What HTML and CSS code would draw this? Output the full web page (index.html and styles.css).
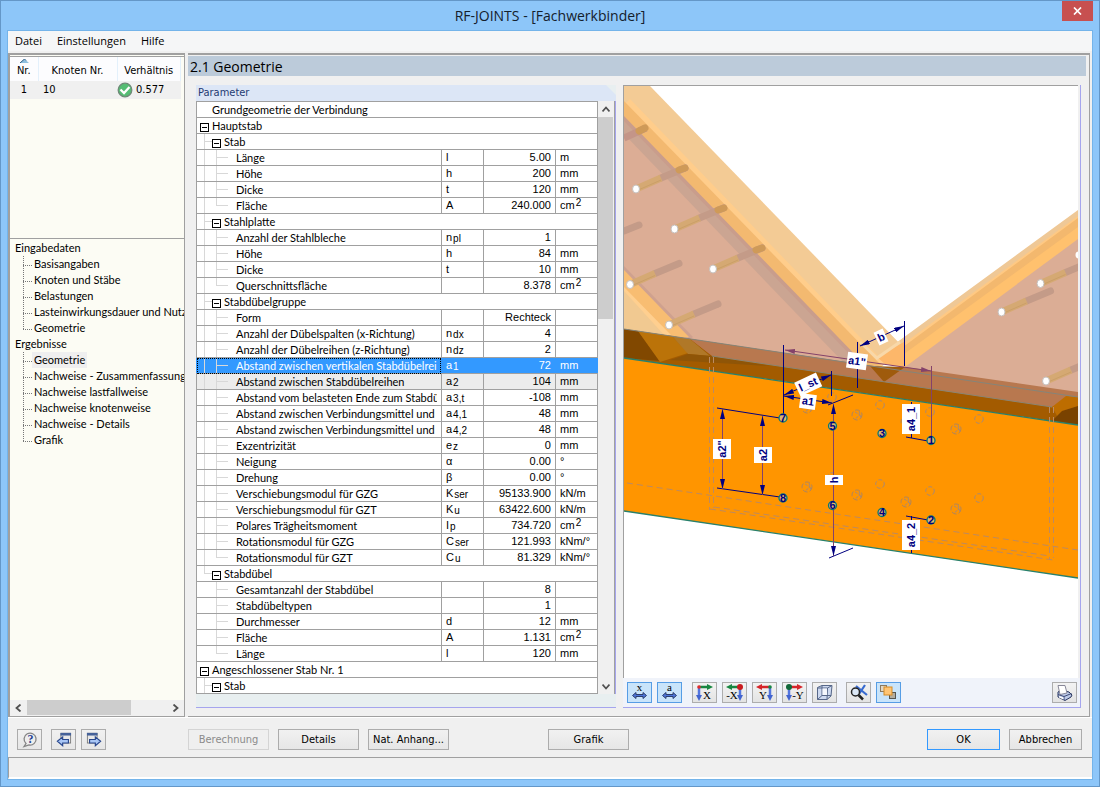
FILE: index.html
```html
<!DOCTYPE html>
<html lang="de">
<head>
<meta charset="utf-8">
<title>RF-JOINTS - [Fachwerkbinder]</title>
<link rel="stylesheet" href="styles.css">
</head>
<body>
<div class="window">
  <header class="titlebar">
    <h1>RF-JOINTS - [Fachwerkbinder]</h1>
    <button class="close" type="button" aria-label="Schließen"><svg width="9" height="8" viewBox="0 0 9 8"><path d="M1 0.5 8 7.5M8 0.5 1 7.5" stroke="#fff" stroke-width="1.7"/></svg></button>
  </header>
  <div class="client">
    <nav class="menubar"><button type="button">Datei</button><button type="button">Einstellungen</button><button type="button">Hilfe</button></nav>

    <main class="main">
      <aside class="side">
        <div class="cases">
          <table class="case-table">
            <colgroup><col class="c-nr"><col class="c-node"><col></colgroup>
            <thead><tr><th><svg class="sort" width="9" height="4" viewBox="0 0 9 4"><path d="M0 4 4.5 0 9 4z" fill="#8fc0e0"/><path d="M0 4 4.5 0 6 1.500" fill="none" stroke="#2c5a80"/></svg>Nr.</th><th>Knoten Nr.</th><th>Verhältnis</th></tr></thead>
            <tbody><tr><td class="nr">1</td><td>10</td><td class="ratio"><svg width="16" height="16" viewBox="0 0 16 16"><circle cx="8" cy="8" r="6.800" fill="#55bd74" stroke="#6f8a78" stroke-width="1.300"/><path d="M3.500 7.500 7 11 12.500 5" fill="none" stroke="#fff" stroke-width="2.300"/></svg>0.577</td></tr></tbody>
          </table>
        </div>
        <nav class="tree">
          <div class="branch">Eingabedaten</div>
          <ul>
            <li><a href="#">Basisangaben</a></li>
            <li><a href="#">Knoten und Stäbe</a></li>
            <li><a href="#">Belastungen</a></li>
            <li><a href="#">Lasteinwirkungsdauer und Nutz</a></li>
            <li><a href="#">Geometrie</a></li>
          </ul>
          <div class="branch">Ergebnisse</div>
          <ul>
            <li><a href="#" class="current">Geometrie</a></li>
            <li><a href="#">Nachweise - Zusammenfassung</a></li>
            <li><a href="#">Nachweise lastfallweise</a></li>
            <li><a href="#">Nachweise knotenweise</a></li>
            <li><a href="#">Nachweise - Details</a></li>
            <li><a href="#">Grafik</a></li>
          </ul>
        </nav>
        <div class="hscroll">
          <button type="button" aria-label="Nach links"><svg width="7" height="8" viewBox="0 0 7 8"><path d="M5.500 0.500 1.500 4 5.500 7.500" fill="none" stroke="#505050" stroke-width="1.800"/></svg></button>
          <div class="htrack"><div class="hthumb"></div></div>
          <button type="button" aria-label="Nach rechts"><svg width="7" height="8" viewBox="0 0 7 8"><path d="M1.500 0.500 5.500 4 1.500 7.500" fill="none" stroke="#505050" stroke-width="1.800"/></svg></button>
        </div>
      </aside>

      <section class="content">
        <h2>2.1 Geometrie</h2>
        <div class="panes">
          <section class="params">
            <h3>Parameter</h3>
            <div class="grid-wrap">
              <table class="grid">
                <colgroup><col><col class="c-sym"><col class="c-val"><col class="c-unit"></colgroup>
                <tbody>
                <tr><td colspan="4" class="g0 plain">Grundgeometrie der Verbindung</td></tr>
                <tr><td colspan="4" class="g0"><button class="fold" type="button" aria-label="Hauptstab"></button>Hauptstab</td></tr>
                <tr><td colspan="4" class="g1"><button class="fold" type="button" aria-label="Stab"></button>Stab</td></tr>
                <tr><td class="leaf">Länge</td><td>l</td><td>5.00</td><td>m</td></tr>
                <tr><td class="leaf">Höhe</td><td>h</td><td>200</td><td>mm</td></tr>
                <tr><td class="leaf">Dicke</td><td>t</td><td>120</td><td>mm</td></tr>
                <tr><td class="leaf last">Fläche</td><td>A</td><td>240.000</td><td>cm<sup>2</sup></td></tr>
                <tr><td colspan="4" class="g1"><button class="fold" type="button" aria-label="Stahlplatte"></button>Stahlplatte</td></tr>
                <tr><td class="leaf">Anzahl der Stahlbleche</td><td>n<sub>pl</sub></td><td>1</td><td></td></tr>
                <tr><td class="leaf">Höhe</td><td>h</td><td>84</td><td>mm</td></tr>
                <tr><td class="leaf">Dicke</td><td>t</td><td>10</td><td>mm</td></tr>
                <tr><td class="leaf last">Querschnittsfläche</td><td></td><td>8.378</td><td>cm<sup>2</sup></td></tr>
                <tr><td colspan="4" class="g1"><button class="fold" type="button" aria-label="Stabdübelgruppe"></button>Stabdübelgruppe</td></tr>
                <tr><td class="leaf">Form</td><td></td><td>Rechteck</td><td></td></tr>
                <tr><td class="leaf">Anzahl der Dübelspalten (x-Richtung)</td><td>n<sub>dx</sub></td><td>4</td><td></td></tr>
                <tr><td class="leaf">Anzahl der Dübelreihen (z-Richtung)</td><td>n<sub>dz</sub></td><td>2</td><td></td></tr>
                <tr class="selected"><td class="leaf"><span>Abstand zwischen vertikalen Stabdübelreih</span></td><td>a<sub>1</sub></td><td>72</td><td>mm</td></tr>
                <tr class="shaded"><td class="leaf">Abstand zwischen Stabdübelreihen</td><td>a<sub>2</sub></td><td>104</td><td>mm</td></tr>
                <tr><td class="leaf"><span>Abstand vom belasteten Ende zum Stabdü</span></td><td>a<sub>3,t</sub></td><td>-108</td><td>mm</td></tr>
                <tr><td class="leaf"><span>Abstand zwischen Verbindungsmittel und F</span></td><td>a<sub>4,1</sub></td><td>48</td><td>mm</td></tr>
                <tr><td class="leaf"><span>Abstand zwischen Verbindungsmittel und F</span></td><td>a<sub>4,2</sub></td><td>48</td><td>mm</td></tr>
                <tr><td class="leaf">Exzentrizität</td><td>e<sub>z</sub></td><td>0</td><td>mm</td></tr>
                <tr><td class="leaf">Neigung</td><td>α</td><td>0.00</td><td>°</td></tr>
                <tr><td class="leaf">Drehung</td><td>β</td><td>0.00</td><td>°</td></tr>
                <tr><td class="leaf">Verschiebungsmodul für GZG</td><td>K<sub>ser</sub></td><td>95133.900</td><td>kN/m</td></tr>
                <tr><td class="leaf">Verschiebungsmodul für GZT</td><td>K<sub>u</sub></td><td>63422.600</td><td>kN/m</td></tr>
                <tr><td class="leaf">Polares Trägheitsmoment</td><td>I<sub>p</sub></td><td>734.720</td><td>cm<sup>2</sup></td></tr>
                <tr><td class="leaf">Rotationsmodul für GZG</td><td>C<sub>ser</sub></td><td>121.993</td><td>kNm/°</td></tr>
                <tr><td class="leaf last">Rotationsmodul für GZT</td><td>C<sub>u</sub></td><td>81.329</td><td>kNm/°</td></tr>
                <tr><td colspan="4" class="g1 end"><button class="fold" type="button" aria-label="Stabdübel"></button>Stabdübel</td></tr>
                <tr><td class="leaf tail">Gesamtanzahl der Stabdübel</td><td></td><td>8</td><td></td></tr>
                <tr><td class="leaf tail">Stabdübeltypen</td><td></td><td>1</td><td></td></tr>
                <tr><td class="leaf tail">Durchmesser</td><td>d</td><td>12</td><td>mm</td></tr>
                <tr><td class="leaf tail">Fläche</td><td>A</td><td>1.131</td><td>cm<sup>2</sup></td></tr>
                <tr><td class="leaf tail last">Länge</td><td>l</td><td>120</td><td>mm</td></tr>
                <tr><td colspan="4" class="g0"><button class="fold" type="button" aria-label="Angeschlossener Stab Nr. 1"></button>Angeschlossener Stab Nr. 1</td></tr>
                <tr><td colspan="4" class="g1"><button class="fold" type="button" aria-label="Stab"></button>Stab</td></tr>
                </tbody>
              </table>
              <div class="vscroll">
                <button type="button" aria-label="Nach oben"><svg width="8" height="7" viewBox="0 0 8 7"><path d="M0.500 5.500 4 1.500 7.500 5.500" fill="none" stroke="#505050" stroke-width="1.800"/></svg></button>
                <div class="vtrack"><div class="vthumb"></div></div>
                <button type="button" aria-label="Nach unten"><svg width="8" height="7" viewBox="0 0 8 7"><path d="M0.500 1.500 4 5.500 7.500 1.500" fill="none" stroke="#505050" stroke-width="1.800"/></svg></button>
              </div>
            </div>
          </section>

          <section class="viewer">
            <div class="canvas">
            <svg viewBox="624 86 454 592" preserveAspectRatio="xMidYMid slice" role="img" aria-label="Knotendetail">
              <defs>
                <marker id="arr" viewBox="0 0 12 6" refX="12" refY="3" markerWidth="10" markerHeight="5" orient="auto-start-reverse" markerUnits="userSpaceOnUse"><path d="M0 0 12 3 0 6z" fill="#000080"/></marker>
                <marker id="arrp" viewBox="0 0 12 6" refX="12" refY="3" markerWidth="10" markerHeight="5" orient="auto-start-reverse" markerUnits="userSpaceOnUse"><path d="M0 0 12 3 0 6z" fill="#84426a"/></marker>
                <g id="rod"><path d="M25-11 49-21" stroke="#c49b88" stroke-width="7" stroke-linecap="round"/><path d="M0 0 25-11" stroke="#d5a973" stroke-width="7"/><path d="M0 2 25-9" stroke="#cb9f68" stroke-width="1"/><ellipse rx="3.500" ry="4" fill="#fff" stroke="#c5c0bd"/></g>
                <g id="hole"><circle r="4.300" fill="none" stroke="#a98974" stroke-dasharray="4 2"/></g>
                <g id="hole2"><circle r="5" fill="none" stroke="#b0855d" stroke-dasharray="5 2"/><path d="M-2-3 3 0-2 4M2-4 4 3" fill="none" stroke="#a98974" stroke-dasharray="3 1"/></g>
                <g id="pin"><circle r="4" fill="#deb46e" stroke="#087872" stroke-width="1.300"/></g>
              </defs>
              <!-- right diagonal -->
              <path d="M1078 210 870 362 905 367 1078 393z" fill="#efc896"/>
              <path d="M1078 216 884 358 905 367 1078 393z" fill="#ffc983"/>
              <path d="M1078 218 884 361 905 367 1078 393z" fill="#f3b86e"/>
              <path d="M1078 227 889 365 905 367 1078 393z" fill="#ffc16e"/>
              <path d="M1078 239 905 367 1078 398z" fill="#dbad95"/>
              <!-- left diagonal -->
              <path d="M624 86H650L905 349 877 370 624 329z" fill="#f3cb95"/>
              <path d="M630 99 624 105V329L880 370 884 362z" fill="#ffcd8b"/>
              <path d="M624 101V329L872 368 881 365z" fill="#f3b970"/>
              <path d="M624 116V329L860 365 867 367z" fill="#c99d8c"/>
              <path d="M624 121V329L852 364 861 366z" fill="#cba592"/>
              <path d="M624 134V329L844 363z" fill="#dcad95"/>
              <path d="M624 266V329L690 339 693 337z" fill="#cfa18f"/>
              <path d="M624 270V329L682 338 689 337z" fill="#f8bd72"/>
              <path d="M624 287V329L664 335 671 335z" fill="#ffcf8f"/>
              <path d="M624 291V330L665 336z" fill="#f1c991"/>
              <path d="M877 357 904 342 904 367 885 364z" fill="#fdb76a"/>
              <path d="M860 342 877 358 900 342" fill="none" stroke="#f8d8a9" stroke-width="3"/>
              <!-- dowels -->
              <path d="M624 138 646 128" stroke="#c49588" stroke-width="7"/><path d="M639 131 645 128" stroke="#cf9a58" stroke-width="7" stroke-linecap="round"/>
              <path d="M624 231 639 225" stroke="#c49b88" stroke-width="7" stroke-linecap="round"/>
              <use href="#rod" x="636" y="189"/><use href="#rod" x="674.500" y="229"/><use href="#rod" x="713" y="269"/>
              <path d="M679 170 685 168M718 210 724 208M756 250 762 248" stroke="#cf9a58" stroke-width="7" stroke-linecap="round"/>
              <use href="#rod" x="630" y="284.500"/><use href="#rod" x="669" y="325"/>
              <use href="#rod" x="1040.500" y="283.500"/><use href="#rod" x="1001.500" y="312"/><use href="#rod" x="1046" y="381"/><circle cx="1079" cy="255" r="3.500" fill="#fff"/>
              <!-- chord -->
              <path d="M624 329 1078 397V425L624 358z" fill="#a35b00"/>
              <path d="M690 339 880 367 905 367 1078 392V397L1052 407 712 356z" fill="#b8784f"/>
              <path d="M624 329 638 331 660 361 624 358z" fill="#814800"/>
              <path d="M638 331 672 336 688 353 660 362z" fill="#bb7309"/>
              <path d="M672 336 690 339 710 356 688 354z" fill="#b07828"/>
              <path d="M688 354 712 356 770 366 670 360z" fill="#8f5507"/>
              <path d="M870 366 905 367 884 382z" fill="#9f5b0c"/>
              <path d="M1052 407 1066 396 1078 397V406L1060 421z" fill="#bd6d00"/>
              <path d="M1062 411 1078 406V425L1052 421z" fill="#794200"/>
              <path d="M624 329 1078 397" stroke="#85857a" stroke-width="1"/>
              <path d="M712 356 1052 407" stroke="#8b8572" stroke-width="1"/>
              <path d="M624 358 1078 425V578L624 511z" fill="#ff9500"/>
              <path d="M624 358 1078 425M624 511 1078 578" stroke="#28806c" stroke-width="1.300"/>
              <g fill="none" stroke="#bd8a60" stroke-width="1" stroke-dasharray="6 4">
                <path d="M709.500 357V510M713.500 357V508M1049.500 407V560M1053.500 407V558M627 483 1078 550M710 509 1053 560M714 507 1050 556"/>
              </g>
              <use href="#hole2" x="807" y="408"/><use href="#hole2" x="857" y="415"/><use href="#hole" x="832" y="397"/><use href="#hole" x="880" y="405"/><use href="#hole2" x="906" y="422"/><use href="#hole" x="930" y="412"/><use href="#hole2" x="956" y="429"/><use href="#hole" x="979" y="419"/>
              <use href="#hole2" x="807" y="487"/><use href="#hole2" x="857" y="495"/><use href="#hole" x="880" y="484"/><use href="#hole2" x="906" y="502"/><use href="#hole" x="930" y="491"/><use href="#hole2" x="956" y="509"/><use href="#hole" x="979" y="498"/><use href="#hole" x="832" y="477"/>
              <!-- dimension lines -->
              <g stroke="#000080" stroke-width="1" fill="none">
                <path d="M717 408 780 418M717 488 780 497M783.500 345V415M828 405 853 395M829 558 853 548M904.500 321V366M857.500 342V388M906 437 928 441M906 516 928 520M911.500 402V438M911.500 516V553M831.500 371V396"/>
                <path d="M722.500 409V489" stroke="#84426a" marker-start="url(#arr)" marker-end="url(#arr)"/>
                <path d="M762.500 416V495" stroke="#84426a" marker-start="url(#arr)" marker-end="url(#arr)"/>
                <path d="M784 395 831 375" marker-start="url(#arr)" marker-end="url(#arr)"/>
                <path d="M784 396 832 403" marker-start="url(#arr)" marker-end="url(#arr)"/>
                <path d="M860 346 904 326" marker-start="url(#arr)" marker-end="url(#arr)"/>
                <path d="M833.500 404V556" stroke="#84426a" marker-start="url(#arr)" marker-end="url(#arr)"/>
                <path d="M785 350 931 371" stroke="#84426a" marker-start="url(#arrp)" marker-end="url(#arrp)"/>
                <path d="M931.500 366V438" stroke="#84426a"/>
              </g>
              <g><use href="#pin" x="783" y="418"/><use href="#pin" x="832.500" y="426"/><use href="#pin" x="882" y="433.500"/><use href="#pin" x="931" y="440.500"/><use href="#pin" x="783" y="498"/><use href="#pin" x="832.500" y="505.500"/><use href="#pin" x="882" y="512.500"/><use href="#pin" x="931" y="520"/></g>
              <g class="dim" text-anchor="middle">
                <text x="783" y="422">7</text><text x="832.500" y="430">5</text><text x="882" y="437">3</text><text x="931" y="444">1</text><text x="783" y="502">8</text><text x="832.500" y="509">6</text><text x="882" y="516">4</text><text x="931" y="524">2</text>
                <g transform="translate(722 449) rotate(-90)"><rect x="-10" y="-9" width="20" height="18" fill="#fff"/><text y="4">a2"</text></g>
                <g transform="translate(763 455) rotate(-90)"><rect x="-8" y="-9" width="16" height="18" fill="#fff"/><text y="4">a2</text></g>
                <g transform="translate(834 480) rotate(-90)"><rect x="-5" y="-9" width="10" height="18" fill="#fff"/><text y="4">h</text></g>
                <g transform="translate(911 419) rotate(-90)"><rect x="-15" y="-9" width="30" height="18" fill="#fff"/><text y="4">a4_1</text></g>
                <g transform="translate(911 535) rotate(-90)"><rect x="-15" y="-9" width="30" height="18" fill="#fff"/><text y="4">a4_2</text></g>
                <g transform="translate(857 361) rotate(8)"><rect x="-10" y="-8" width="20" height="16" fill="#fff"/><text y="4">a1"</text></g>
                <g transform="translate(808 401) rotate(8)"><rect x="-8" y="-7" width="16" height="15" fill="#fff"/><text y="4">a1</text></g>
                <g transform="translate(808 384) rotate(-25)"><rect x="-12" y="-7" width="24" height="15" fill="#fff"/><text y="4">l_st</text></g>
                <g transform="translate(881 337) rotate(-25)"><rect x="-5" y="-7" width="10" height="14" fill="#fff"/><text y="4">b</text></g>
              </g>
            </svg>
            </div>
            <div class="tools">
              <button type="button" class="tool on" aria-label="Maße x"><svg width="21" height="17" viewBox="0 0 21 17"><text x="10.500" y="7" text-anchor="middle" class="ax">x</text><path d="M3.500 11.500 7 8.500V10.500H14V8.500L17.500 11.500 14 14.500V12.500H7V14.500z" fill="#4d74d8" stroke="#2c3f6e"/></svg></button>
              <button type="button" class="tool on" aria-label="Maße a"><svg width="21" height="17" viewBox="0 0 21 17"><text x="10.500" y="7" text-anchor="middle" class="ax">a</text><path d="M3.500 11.500 7 8.500V10.500H14V8.500L17.500 11.500 14 14.500V12.500H7V14.500z" fill="#4d74d8" stroke="#2c3f6e"/></svg></button>
              <button type="button" class="tool gap" aria-label="Ansicht X"><svg width="21" height="17" viewBox="0 0 21 17"><path d="M5 3H14" stroke="#188742" stroke-width="2.500"/><path d="M13 0 19 3 13 6z" fill="#188742"/><path d="M5 3V12" stroke="#5476df" stroke-width="2.500"/><path d="M2 11H8L5 17z" fill="#4264cf"/><circle cx="5" cy="3" r="1.800" fill="#e12c2c"/><text x="13" y="15" text-anchor="middle" class="ax">X</text></svg></button>
              <button type="button" class="tool" aria-label="Ansicht -X"><svg width="21" height="17" viewBox="0 0 21 17"><path d="M7 3H16" stroke="#188742" stroke-width="2.500"/><path d="M8 0 2 3 8 6z" fill="#188742"/><path d="M16 3V12" stroke="#5476df" stroke-width="2.500"/><path d="M13 11H19L16 17z" fill="#4264cf"/><circle cx="16" cy="3" r="3" fill="#c91b20"/><text x="8" y="15" text-anchor="middle" class="ax">-X</text></svg></button>
              <button type="button" class="tool" aria-label="Ansicht Y"><svg width="21" height="17" viewBox="0 0 21 17"><path d="M7 3H16" stroke="#d6252b" stroke-width="2.500"/><path d="M8 0 2 3 8 6z" fill="#d6252b"/><path d="M16 3V12" stroke="#5476df" stroke-width="2.500"/><path d="M13 11H19L16 17z" fill="#4264cf"/><circle cx="16" cy="3" r="1.800" fill="#188742"/><text x="9" y="15" text-anchor="middle" class="ax">Y</text></svg></button>
              <button type="button" class="tool" aria-label="Ansicht -Y"><svg width="21" height="17" viewBox="0 0 21 17"><path d="M5 3H14" stroke="#d6252b" stroke-width="2.500"/><path d="M13 0 19 3 13 6z" fill="#d6252b"/><path d="M5 3V12" stroke="#5476df" stroke-width="2.500"/><path d="M2 11H8L5 17z" fill="#4264cf"/><circle cx="5" cy="3" r="3" fill="#11683a"/><text x="14" y="15" text-anchor="middle" class="ax">-Y</text></svg></button>
              <button type="button" class="tool" aria-label="Isometrie"><svg width="21" height="17" viewBox="0 0 21 17"><path d="M3.500 3.500 8 1.500H18L17 12 13 15.500H3.500z" fill="#cdd9f0" stroke="#566789"/><path d="M3.500 4H13.500L13 15.500M13.500 4 18 1.500M3.500 15.500 8 11.500H17M8 1.500V11.500" fill="none" stroke="#566789" stroke-width="1"/><path d="M8.500 4.500H13V11H8.500z" fill="#f4f7fd"/></svg></button>
              <button type="button" class="tool gap2" aria-label="Zoom"><svg width="21" height="17" viewBox="0 0 21 17"><path d="M8 2 19 11M17 1 11 10" stroke="#386bd0" stroke-width="2.200"/><circle cx="7.500" cy="8" r="4" fill="#dce8f6" stroke="#222" stroke-width="1.500"/><path d="M10.500 11 15 15.500" stroke="#222" stroke-width="2.500"/></svg></button>
              <button type="button" class="tool on" aria-label="Transparenz"><svg width="21" height="17" viewBox="0 0 21 17"><rect x="2.500" y="1.500" width="6" height="6" fill="#e2d8c5" stroke="#8a7a62"/><rect x="11.500" y="8.500" width="6" height="6" fill="#b3ad9f" stroke="#55554f"/><rect x="6" y="3" width="8" height="8" fill="#ffc574" stroke="#d58b26"/></svg></button>
              <button type="button" class="tool print" aria-label="Drucken"><svg width="21" height="18" viewBox="0 0 21 18"><path d="M4 8 7 6 15 8 18 11 17 13 11 16.500 4 13z" fill="#bcc9e8" stroke="#27345e"/><path d="M4 1.500H11L13 9 6 10.500z" fill="#fff" stroke="#889"/><path d="M10 12.500 17.500 9.500M10 12.500 4 10.500M10 12.500V16" fill="none" stroke="#3c4a76"/><path d="M5 12 9.500 13.500V15.500L5 13.500z" fill="#fff"/></svg></button>
            </div>
          </section>
        </div>
      </section>
    </main>

    <footer class="actions">
      <div class="left-actions">
        <button type="button" class="btn ico" aria-label="Hilfe"><svg width="18" height="17" viewBox="0 0 18 17"><path d="M3 15.500 5 12.500A6 6 0 1 1 8 14z" fill="#eee" stroke="#858585" stroke-width="1.300"/><text x="9.500" y="12" text-anchor="middle" class="help">?</text></svg></button>
        <button type="button" class="btn ico prev" aria-label="Zurück"><svg width="16" height="15" viewBox="0 0 18 17"><rect x="5.500" y="1.500" width="11" height="11" fill="#e8e8e8" stroke="#777"/><rect x="5" y="1" width="12" height="3" fill="#456199"/><path d="M1.500 10.500 7.500 5.500V8.500H14V12.500H7.500V15.500z" fill="#a9c6f5" stroke="#29478d" stroke-width="1.300"/></svg></button>
        <button type="button" class="btn ico" aria-label="Weiter"><svg width="16" height="15" viewBox="0 0 18 17"><rect x="1.500" y="1.500" width="11" height="11" fill="#e8e8e8" stroke="#777"/><rect x="1" y="1" width="12" height="3" fill="#456199"/><path d="M16.500 10.500 10.500 5.500V8.500H4V12.500H10.500V15.500z" fill="#a9c6f5" stroke="#29478d" stroke-width="1.300"/></svg></button>
      </div>
      <div class="mid-actions">
        <button type="button" class="btn" disabled>Berechnung</button>
        <button type="button" class="btn">Details</button>
        <button type="button" class="btn">Nat. Anhang...</button>
        <button type="button" class="btn far">Grafik</button>
      </div>
      <div class="end-actions">
        <button type="button" class="btn default">OK</button>
        <button type="button" class="btn">Abbrechen</button>
      </div>
    </footer>
    <div class="status"></div>
  </div>
</div>
</body>
</html>
```
FILE: styles.css
```css
* { box-sizing: border-box; }
body { margin: 0; font: 11px/16px "DejaVu Sans Condensed", "Open Sans", sans-serif; color: #000; }
button { font: inherit; color: inherit; padding: 0; margin: 0; border: 0; background: none; }
svg { display: block; }
h1, h2, h3, ul { margin: 0; padding: 0; font-weight: normal; }

.window { min-height: 100vh; display: flex; flex-direction: column; background: #8dc6f9; border: 1px solid #6497c8; padding: 0 6px 6px; }
.titlebar { position: relative; height: 29px; text-align: center; }
.titlebar h1 { font: 14px/29px "Open Sans", sans-serif; color: #14202c; }
.close { position: absolute; right: 0; top: 0; width: 31px; height: 20px; background: #c75050; display: flex; align-items: center; justify-content: center; }
.client { flex: 1; display: flex; flex-direction: column; border: 1px solid #74b4ea; background: #f0f0f0; }

.menubar { display: flex; height: 22px; padding-left: 7px; gap: 15px; background: #f5f6f7; border-bottom: 2px solid #f0f0f0; font: 11px/20px "Open Sans", sans-serif; }

.main { flex: 1; display: flex; gap: 3px; padding-right: 2px; border-bottom: 1px solid #fff; min-height: 0; }
.side { width: 177px; flex: none; display: flex; flex-direction: column; background: #fcfcf4; border: solid #a0a0a0; border-width: 2px 1px 1px 2px; }
.cases { height: 182px; margin-top: 1px; border-top: 1px solid #a0a0a0; }
.case-table { width: 171px; border-collapse: collapse; table-layout: fixed; }
.c-nr { width: 28px; }
.c-node { width: 79px; }
.case-table th { position: relative; height: 24px; padding: 3px 0 0; font-weight: normal; background: #fcfcfe; border-right: 1px solid #e3f0fb; }
.sort { position: absolute; top: 2px; left: 10px; }
.case-table td { height: 18px; padding: 0 5px; background: #f0f0f0; }
.case-table .nr { text-align: center; }
.case-table .ratio { display: flex; align-items: center; gap: 3px; padding: 0; }

.tree { flex: 1; min-height: 0; padding-top: 1px; border-top: 1px solid #a0a0a0; overflow: hidden; white-space: nowrap; font-family: Lato, "Liberation Sans", sans-serif; }
.branch { padding-left: 5px; }
.tree ul { list-style: none; padding-left: 13px; }
.tree li { display: flex; height: 16px; background: linear-gradient(#777 50%, transparent 50%) 0 0 / 1px 2px repeat-y; }
.tree li::before { content: ""; flex: none; width: 9px; height: 9px; border-bottom: 1px dotted #777; }
.tree li:last-child { background: linear-gradient(#fcfcf4, #fcfcf4) 0 9px / 1px 7px no-repeat, linear-gradient(#777 50%, transparent 50%) 0 0 / 1px 2px repeat-y; }
.tree a { padding: 0 2px; color: inherit; text-decoration: none; }
.tree .current { background: #efefef; }
.hscroll { display: flex; height: 16px; background: #f0f0f0; }
.hscroll button { width: 17px; display: flex; align-items: center; justify-content: center; }
.htrack { flex: 1; }
.hthumb { width: 74%; height: 15px; background: #cdcdcd; }

.content { flex: 1; min-width: 0; display: flex; flex-direction: column; border: solid #a0a0a0; border-width: 2px 1px 1px 0; padding: 1px 3px 8px 0; }
.content h2 { height: 20px; padding-left: 2px; font: 14px/21px "Open Sans", sans-serif; background: #bccbda; }
.panes { flex: 1; display: flex; gap: 7px; padding: 9px 5px 0 8px; }
.params { width: 420px; flex: none; display: flex; flex-direction: column; background: #e8eff0; border-bottom: 1px solid #a5a5ee; }
.params h3 { height: 16px; padding-left: 2px; font-size: 11px; color: #1f3b73; background: #dce6f6; clip-path: polygon(0 0, 410px 0, 100% 10px, 100% 100%, 0 100%); }
.grid-wrap { display: flex; border-right: 1px solid #a5a5ee; margin-bottom: 13px; }
.grid { width: 402px; border-collapse: collapse; table-layout: fixed; background: #fff; font: 11px/15px "Liberation Sans", Arial, sans-serif; }
.c-sym { width: 42px; }
.c-val { width: 72px; }
.c-unit { width: 42px; }
.grid td { height: 16px; padding: 0 4px; border: 1px solid #a0a0a0; white-space: nowrap; overflow: hidden; line-height: 15px; }
.grid td:first-child { font-family: Lato, "Liberation Sans", sans-serif; }
.grid td:nth-child(3) { text-align: right; }
.grid td:nth-child(4) { padding-right: 0; }
.grid sub, .grid sup { font-size: 10px; line-height: 0; padding-left: 1px; }
.grid sub { vertical-align: -1px; }
.grid sup { vertical-align: 3px; }
.grid .g0 { padding-left: 3px; }
.grid .plain { padding-left: 15px; }
.grid .g1 { padding-left: 15px; background: linear-gradient(#d8d8d8, #d8d8d8) 7px 0 / 1px 100% no-repeat, linear-gradient(#d8d8d8, #d8d8d8) 7px 7px / 8px 1px no-repeat; }
.grid .g1.end { background: linear-gradient(#d8d8d8, #d8d8d8) 7px 0 / 1px 8px no-repeat, linear-gradient(#d8d8d8, #d8d8d8) 7px 7px / 8px 1px no-repeat; }
.fold { width: 9px; height: 9px; margin-right: 3px; border: 1px solid #000; background: linear-gradient(#000, #000) 1px 3px / 5px 1px no-repeat #fff; vertical-align: -1px; }
.grid .leaf { padding-left: 39px; --a: 7px; background: linear-gradient(#d8d8d8, #d8d8d8) var(--a) 0 / 1px 100% no-repeat, linear-gradient(#d8d8d8, #d8d8d8) 19px 0 / 1px 100% no-repeat, linear-gradient(#d8d8d8, #d8d8d8) 19px 7px / 12px 1px no-repeat; }
.grid .leaf.last { background-size: 1px 100%, 1px 8px, 12px 1px; }
.grid .leaf.tail { --a: -2px; }
.leaf span { display: block; overflow: hidden; }
.grid .selected td { background-color: #3399ff; color: #fff; border-color: #3399ff; border-bottom-color: #a0a0a0; }
.grid .selected .leaf { outline: 1px dotted #000; outline-offset: -1px; }
.grid .shaded td { background-color: #ececec; }
.vscroll { width: 17px; margin: 0 0 0 auto; border-right: 1px solid #a0a0a0; display: flex; flex-direction: column; background: #f0f0f0; }
.vscroll button { height: 16px; display: flex; align-items: center; justify-content: center; }
.vtrack { flex: 1; }
.vthumb { width: 15px; height: 36%; background: #cdcdcd; }

.viewer { flex: 1; min-width: 0; display: flex; flex-direction: column; border: solid #a5a5ee; border-width: 0 1px 1px 0; }
.canvas { position: relative; flex: 1; background: #fff; border: solid #a0a0a0; border-width: 1px 0 0 1px; margin-right: 2px; overflow: hidden; }
.canvas svg { position: absolute; inset: 0; width: 100%; height: 100%; }
.dim { font: bold 11px "Liberation Sans", Arial, sans-serif; fill: #000080; }
.tools { height: 29px; display: flex; padding: 4px 3px 0 4px; gap: 5px; background: #f0f3fa; }
.tool { width: 25px; height: 21px; border: 1px solid #adadad; background: linear-gradient(#f3f3f3, #e3e3e3); display: flex; align-items: center; justify-content: center; }
.tool.on { border-color: #569de5; background: #c9e4fa; }
.tool.gap { margin-left: 5px; }
.tool.gap2 { margin-left: 4px; }
.tool.print { margin-left: auto; }
.ax { font: 11px "Liberation Serif", serif; fill: #000; }

.actions { display: flex; height: 39px; padding: 11px 10px 0 9px; }
.left-actions { display: flex; width: 171px; gap: 5px; }
.mid-actions { display: flex; gap: 9px; flex: 1; }
.end-actions { display: flex; gap: 9px; }
.btn { width: 81px; height: 21px; border: 1px solid #acacac; background: linear-gradient(#f1f1f1, #e6e6e6); white-space: nowrap; }
.btn:disabled { color: #8b8b8b; border-color: #d4d4d4; background: #efefef; }
.btn.ico { width: 25px; display: flex; align-items: center; justify-content: center; }
.btn.prev { margin-left: 4px; }
.btn.far { margin-left: 90px; }
.end-actions .btn { width: 73px; }
.btn.default { border-color: #3399ff; }
.help { font: bold 12px "Liberation Serif", serif; fill: #1f3e91; }
.status { height: 22px; border-top: 1px solid #a0a0a0; border-left: 1px solid #a0a0a0; border-bottom: 2px solid #fff; }
```
